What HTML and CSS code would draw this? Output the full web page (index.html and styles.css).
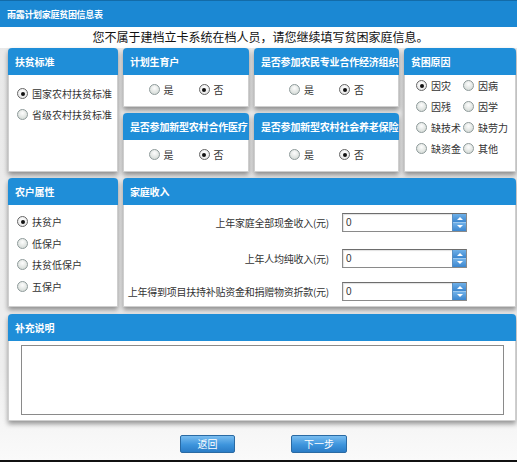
FILE: index.html
```html
<!DOCTYPE html>
<html lang="zh-CN">
<head>
<meta charset="utf-8">
<title>雨露计划家庭贫困信息表</title>
<link rel="stylesheet" href="styles.css">
</head>
<body>
<div class="window">
  <div class="titlebar">雨露计划家庭贫困信息表</div>
  <div class="notice">您不属于建档立卡系统在档人员，请您继续填写贫困家庭信息。</div>
  <div class="content">
    <div class="row1">
      <section class="panel p-std">
        <div class="ph">扶贫标准</div>
        <div class="pb list">
          <label class="opt"><span class="radio on"></span>国家农村扶贫标准</label>
          <label class="opt"><span class="radio"></span>省级农村扶贫标准</label>
        </div>
      </section>
      <section class="panel p-plan">
        <div class="ph">计划生育户</div>
        <div class="pb yesno">
          <label class="opt"><span class="radio"></span>是</label>
          <label class="opt"><span class="radio on"></span>否</label>
        </div>
      </section>
      <section class="panel p-org">
        <div class="ph">是否参加农民专业合作经济组织</div>
        <div class="pb yesno">
          <label class="opt"><span class="radio"></span>是</label>
          <label class="opt"><span class="radio on"></span>否</label>
        </div>
      </section>
      <section class="panel p-cause">
        <div class="ph">贫困原因</div>
        <div class="pb causes">
          <label class="opt"><span class="radio on"></span>因灾</label>
          <label class="opt"><span class="radio"></span>因病</label>
          <label class="opt"><span class="radio"></span>因残</label>
          <label class="opt"><span class="radio"></span>因学</label>
          <label class="opt"><span class="radio"></span>缺技术</label>
          <label class="opt"><span class="radio"></span>缺劳力</label>
          <label class="opt"><span class="radio"></span>缺资金</label>
          <label class="opt"><span class="radio"></span>其他</label>
        </div>
      </section>
      <section class="panel p-med">
        <div class="ph">是否参加新型农村合作医疗</div>
        <div class="pb yesno">
          <label class="opt"><span class="radio"></span>是</label>
          <label class="opt"><span class="radio on"></span>否</label>
        </div>
      </section>
      <section class="panel p-pension">
        <div class="ph">是否参加新型农村社会养老保险</div>
        <div class="pb yesno">
          <label class="opt"><span class="radio"></span>是</label>
          <label class="opt"><span class="radio on"></span>否</label>
        </div>
      </section>
    </div>

    <div class="row2">
      <section class="panel">
        <div class="ph">农户属性</div>
        <div class="pb list list2">
          <label class="opt"><span class="radio on"></span>扶贫户</label>
          <label class="opt"><span class="radio"></span>低保户</label>
          <label class="opt"><span class="radio"></span>扶贫低保户</label>
          <label class="opt"><span class="radio"></span>五保户</label>
        </div>
      </section>
      <section class="panel">
        <div class="ph">家庭收入</div>
        <div class="pb income">
          <div class="irow r1">
            <span class="ilabel">上年家庭全部现金收入(元)</span>
            <span class="num"><span class="val">0</span><span class="spin"><i class="up"></i><i class="down"></i></span></span>
          </div>
          <div class="irow r2">
            <span class="ilabel">上年人均纯收入(元)</span>
            <span class="num"><span class="val">0</span><span class="spin"><i class="up"></i><i class="down"></i></span></span>
          </div>
          <div class="irow r3">
            <span class="ilabel">上年得到项目扶持补贴资金和捐赠物资折款(元)</span>
            <span class="num"><span class="val">0</span><span class="spin"><i class="up"></i><i class="down"></i></span></span>
          </div>
        </div>
      </section>
    </div>

    <section class="panel row3">
      <div class="ph">补充说明</div>
      <div class="pb note">
        <div class="textarea"></div>
      </div>
    </section>

    <div class="actions">
      <button class="btn">返回</button>
      <button class="btn">下一步</button>
    </div>
  </div>
</div>
</body>
</html>
```

FILE: styles.css
```css
* { box-sizing: border-box; }
html, body { margin: 0; padding: 0; }
body {
  width: 517px;
  height: 462px;
  overflow: hidden;
  background: #fff;
  font-family: "Noto Sans CJK SC", "Noto Sans", sans-serif;
  color: #222;
}
.window {
  height: 462px;
  background: linear-gradient(#e8e8e8, #eeeeee 80%, #fafafa);
  border-bottom: 2px solid #111;
  position: relative;
}
.titlebar {
  height: 27px;
  line-height: 27px;
  background: #1b88d3;
  border-top: 1px solid #136ba8;
  color: #fff;
  font-size: 9px;
  font-weight: bold;
  padding-left: 7px;
  letter-spacing: -0.3px;
}
.notice {
  height: 21px;
  line-height: 19px;
  text-align: center;
  font-size: 12px;
  color: #111;
  background: #fff;
  padding-left: 4px;
}
.content {
  padding: 0 1px 0 8px;
}
.panel {
  background: #fff;
  border: 1px solid #cfcfcf;
  border-top: none;
  border-radius: 4px 4px 0 0;
  box-shadow: 0 3px 5px rgba(0, 0, 0, 0.4);
  display: flex;
  flex-direction: column;
}
.ph {
  height: 27px;
  line-height: 27px;
  background: #1f8ed8;
  border-radius: 4px 4px 0 0;
  margin: 0 -1px;
  padding-left: 7px;
  color: #fff;
  font-size: 10px;
  font-weight: bold;
  letter-spacing: -0.2px;
  white-space: nowrap;
  flex: none;
}
.pb {
  flex: 1;
  font-size: 10px;
  color: #333;
}
.row1 {
  display: grid;
  grid-template-columns: 110px 126px 145px 112px;
  grid-template-rows: 59px 59px;
  gap: 6px 5px;
}
.p-std { grid-column: 1; grid-row: 1 / 3; }
.p-plan { grid-column: 2; grid-row: 1; }
.p-org { grid-column: 3; grid-row: 1; }
.p-cause { grid-column: 4; grid-row: 1 / 3; }
.p-med { grid-column: 2; grid-row: 2; }
.p-pension { grid-column: 3; grid-row: 2; }

.opt {
  display: flex;
  align-items: center;
  height: 21px;
  white-space: nowrap;
}
.radio {
  width: 11px;
  height: 11px;
  border-radius: 50%;
  border: 1px solid #8e9a9a;
  background: radial-gradient(circle at 50% 35%, #fdfdfd, #d6dcd8 80%);
  margin-right: 4px;
  position: relative;
  flex: none;
}
.radio.on {
  background: radial-gradient(circle at 50% 35%, #ffffff, #e6e6e6 80%);
  border-color: #666;
}
.radio.on::after {
  content: "";
  position: absolute;
  left: 2.5px;
  top: 2.5px;
  width: 4px;
  height: 4px;
  border-radius: 50%;
  background: #111;
}

.list {
  padding: 8px 0 0 8px;
}
.list2 {
  padding-top: 6px;
}
.list2 .opt { height: 21.5px; }

.yesno {
  display: flex;
  justify-content: center;
  align-items: center;
  gap: 25px;
  padding-bottom: 2px;
}

.causes {
  display: grid;
  grid-template-columns: 47px 47px;
  padding: 0 0 0 11px;
  align-content: start;
}

.row2 {
  display: grid;
  grid-template-columns: 110px 1fr;
  gap: 5px;
  height: 129px;
  margin-top: 6px;
}
.income {
  padding-top: 8px;
}
.irow {
  display: grid;
  grid-template-columns: 205px 125px;
  column-gap: 13px;
  align-items: center;
  height: 19px;
}
.irow.r2 { margin-top: 17px; }
.irow.r3 { margin-top: 14px; }
.ilabel {
  text-align: right;
  white-space: nowrap;
  font-size: 10px;
  letter-spacing: -0.25px;
  color: #333;
}
.num {
  height: 19px;
  border: 1px solid #8a8a8a;
  border-top-color: #6d6d6d;
  background: #fff;
  display: flex;
  align-items: stretch;
  box-shadow: inset 1px 1px 1px rgba(0,0,0,0.12);
}
.val {
  flex: 1;
  font-size: 10px;
  line-height: 17px;
  padding-left: 3px;
  font-family: "Liberation Sans", "Noto Sans", sans-serif;
}
.spin {
  width: 14px;
  display: flex;
  flex-direction: column;
  border-left: 1px solid #5a8fc2;
}
.spin i {
  flex: 1;
  background: linear-gradient(#6fb0e8, #3b86cf);
  position: relative;
}
.spin i + i { border-top: 1px solid #9cc8ee; }
.spin i::after {
  content: "";
  position: absolute;
  left: 4px;
  top: 3px;
  border-left: 3px solid transparent;
  border-right: 3px solid transparent;
}
.spin .up::after { border-bottom: 3px solid #fff; }
.spin .down::after { border-top: 3px solid #fff; top: 2px; }

.row3 {
  height: 107px;
  margin-top: 7px;
}
.note {
  padding: 4px 11px 6px 12px;
}
.textarea {
  height: 70px;
  border: 1px solid #8a8a8a;
  background: #fff;
}

.actions {
  display: flex;
  justify-content: center;
  gap: 56px;
  margin-top: 14px;
  padding-left: 3px;
}
.btn {
  width: 55px;
  height: 18px;
  padding: 0;
  border: 1px solid #2a6aa3;
  border-radius: 2px;
  background: linear-gradient(#79bdf0, #3d94dc 55%, #2a7cc6);
  color: #fff;
  font-family: "Noto Sans CJK SC", sans-serif;
  font-size: 10px;
  line-height: 16px;
}
.btn + .btn { width: 56px; }
```
